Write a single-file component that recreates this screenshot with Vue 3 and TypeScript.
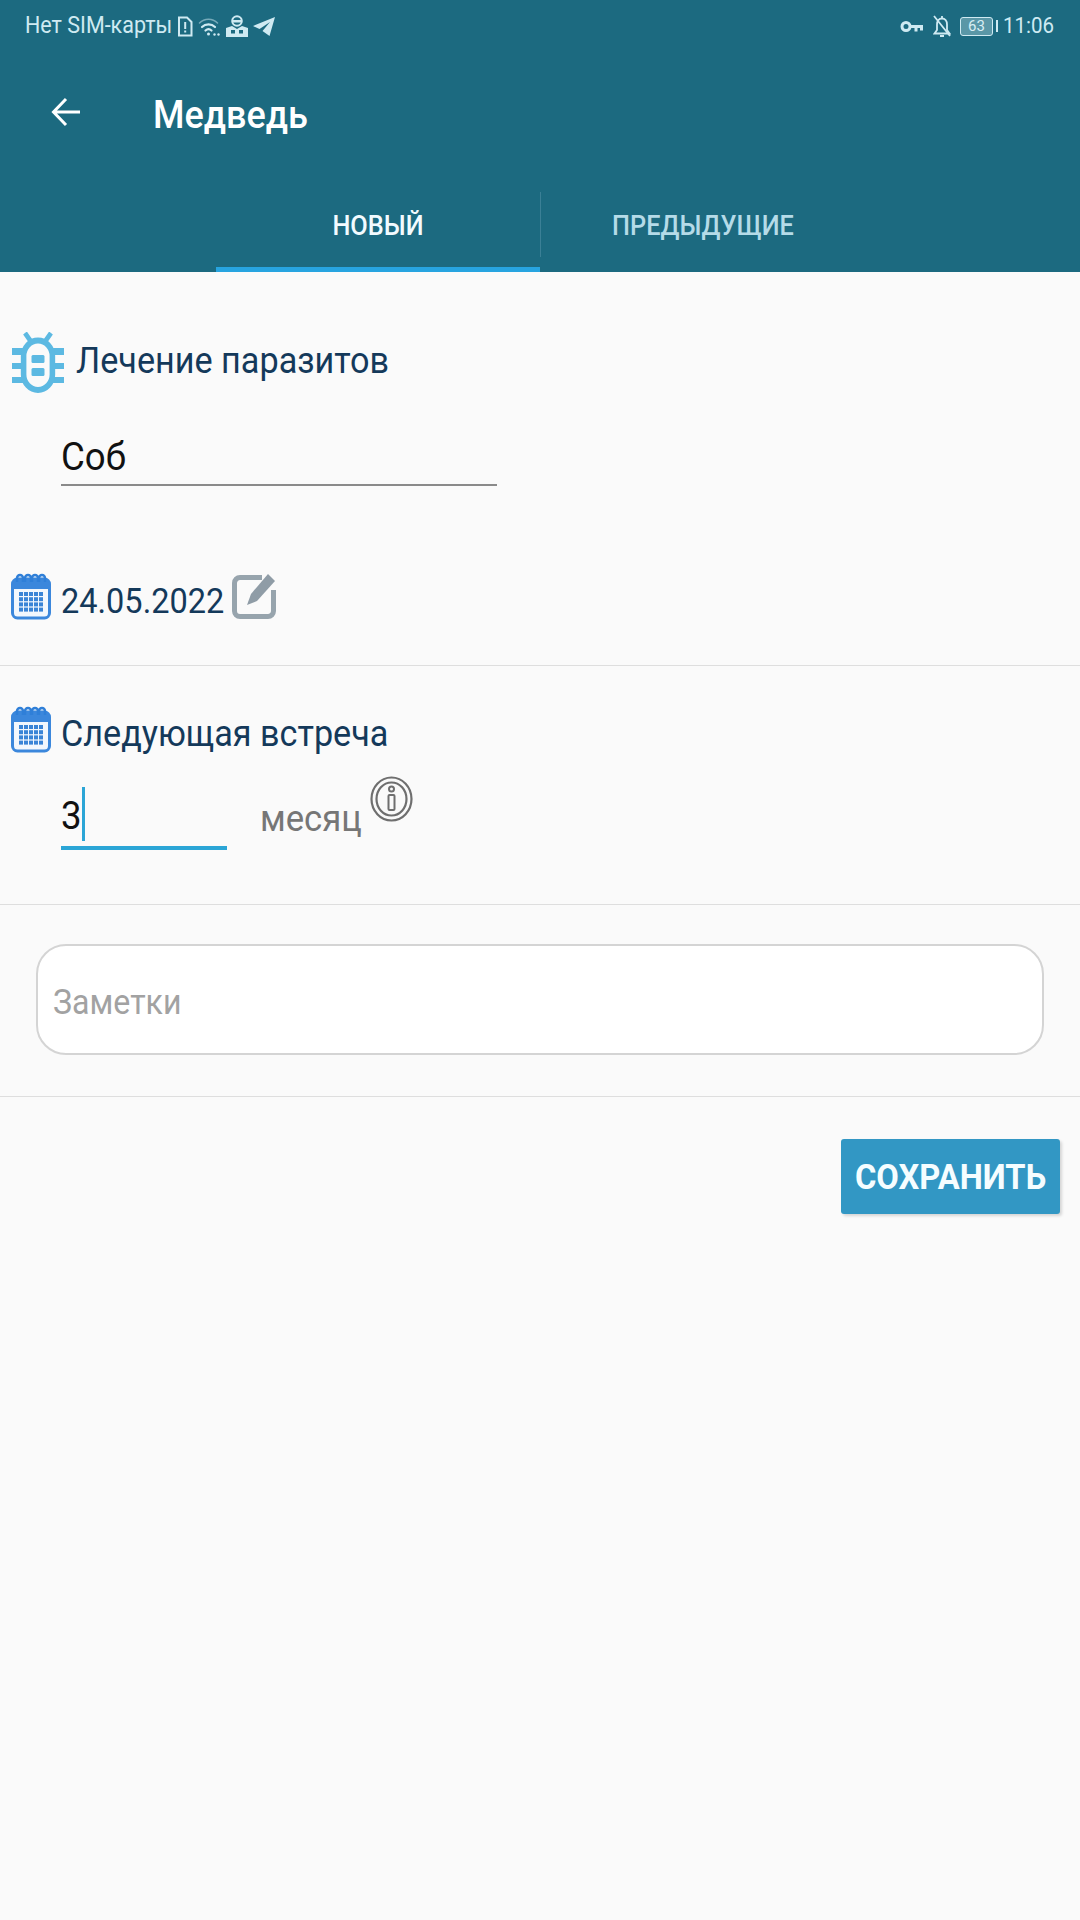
<template>
  <div class="screen">
    <header class="app-header">
      <div class="status-bar">
        <div class="status-side">
          <span class="status-text tall">Нет SIM-карты</span>
          <svg class="ic-sim" viewBox="0 0 16 21" fill="none" stroke="currentColor" stroke-width="2">
            <path d="M2 1.500h8l4.500 4.500v13.500H2z" />
            <path d="M8.200 6v7M8.200 14.500v2" />
          </svg>
          <svg class="ic-wifi" viewBox="0 0 23 21" fill="none" stroke="currentColor" stroke-linecap="round">
            <path d="M1.500 7c5-5 13-5 18 0" stroke-width="1.600" opacity=".5" />
            <path d="M4 11c3.500-3.500 9.500-3.500 13 0" stroke-width="2.200" />
            <path d="M7.500 14.500c2-1.800 4-1.800 6 0" stroke-width="2.200" />
            <circle cx="10.500" cy="18" r="1.500" fill="currentColor" stroke="none" />
            <circle cx="16.500" cy="18.500" r="1.200" fill="currentColor" stroke="none" />
            <circle cx="20.500" cy="18.500" r="1.200" fill="currentColor" stroke="none" />
          </svg>
          <svg class="ic-spy" viewBox="0 0 22 22" fill="currentColor">
            <circle cx="11" cy="6" r="4.800" fill="none" stroke="currentColor" stroke-width="2" />
            <path d="M7 5h8v2.500H7z" />
            <path d="M0 22v-9l6-2 5 3 5-3 6 2v9z" />
            <path d="M5 15h4v3.500H5zM13 15h4v3.500h-4z" fill="#1c6a80" />
          </svg>
          <svg class="ic-send" viewBox="0 0 22 20" fill="currentColor">
            <path d="M22 1 0 10l6.500 3L17 6l-7.500 9 7 5z" />
          </svg>
        </div>
        <div class="status-side status-right">
          <svg class="ic-key" viewBox="0 0 23 13" fill="none" stroke="currentColor" stroke-width="3">
            <circle cx="6" cy="6.500" r="4" />
            <path d="M10 6.500h13M16 6.500v5M21.500 6.500v4" />
          </svg>
          <svg class="ic-bell" viewBox="0 0 18 23" fill="none" stroke="currentColor" stroke-width="1.800">
            <path d="M4 9.500C4 6 6 3.500 9 3.500s5 2.500 5 6V15l2.500 3.500h-15L4 15z" />
            <path d="M7 21h4M9 1v2.500M1 1l16 20" />
          </svg>
          <div class="battery">
            <span class="battery-level">63</span>
          </div>
          <span class="battery-tip"></span>
          <span class="status-text clock tall">11:06</span>
        </div>
      </div>

      <div class="toolbar">
        <svg class="ic-back" viewBox="0 0 29 30" fill="none" stroke="currentColor" stroke-width="3">
          <path d="M29 15H3M15 2 2.500 15 15 28" />
        </svg>
        <h1 class="title tall">{{ petName }}</h1>
      </div>

      <nav class="tabs">
        <div class="tab tab-active"><span class="tall">НОВЫЙ</span></div>
        <div class="tab tab-second"><span class="tall">ПРЕДЫДУЩИЕ</span></div>
      </nav>
    </header>

    <main class="content">
      <section class="section section-treatment">
        <div class="label-row">
          <svg class="ic-bug" viewBox="0 0 56 62" preserveAspectRatio="none" fill="#5cb9e2">
            <path d="M20 9 14 1M36 9l6-8" stroke="#5cb9e2" stroke-width="5" />
            <rect x="0" y="16" width="14" height="7" />
            <rect x="0" y="31" width="14" height="6" />
            <rect x="0" y="45" width="14" height="6" />
            <rect x="42" y="16" width="14" height="7" />
            <rect x="42" y="31" width="14" height="6" />
            <rect x="42" y="45" width="14" height="6" />
            <rect x="12.500" y="8.500" width="31" height="49.500" rx="15.500" fill="#fafafa" stroke="#5cb9e2" stroke-width="6" />
            <rect x="21" y="23" width="14" height="8" rx="1.500" />
            <rect x="21" y="36" width="14" height="8" rx="1.500" />
          </svg>
          <span class="label label-treatment tall">Лечение паразитов</span>
        </div>
        <div class="text-field"><span class="tall">Соб</span></div>
      </section>

      <section class="section section-date">
        <div class="date-row">
          <svg class="ic-calendar" viewBox="0 0 40 48" v-html="calendarMarkup"></svg>
          <span class="label date-value tall">24.05.2022</span>
          <svg class="ic-edit" viewBox="0 0 44 48" fill="none">
            <path d="M30 5.500H8a5.500 5.500 0 0 0-5.500 5.500v28A5.500 5.500 0 0 0 8 44.500h28a5.500 5.500 0 0 0 5.500-5.500V18" stroke="#97a4ad" stroke-width="5" />
            <path d="M15 33l4-11L36 2l7 7-18 20z" fill="#8f9ca6" />
          </svg>
        </div>
      </section>

      <section class="section section-next">
        <div class="label-row next-label">
          <svg class="ic-calendar" viewBox="0 0 40 48" v-html="calendarMarkup"></svg>
          <span class="label next-title tall">Следующая встреча</span>
        </div>
        <div class="period-row">
          <div class="period-input">
            <span class="tall">3</span><span class="caret"></span>
          </div>
          <span class="period-unit tall">месяц</span>
          <svg class="ic-info" viewBox="0 0 43 46" fill="none" stroke="#6f6f6f">
            <ellipse cx="21.500" cy="23" rx="20" ry="21.500" stroke-width="2.200" />
            <ellipse cx="21.500" cy="23" rx="15" ry="16.500" stroke-width="2.200" />
            <rect x="18.500" y="19" width="6" height="15" rx="1" stroke-width="2" />
            <circle cx="21.500" cy="13" r="2.500" stroke-width="2" />
          </svg>
        </div>
      </section>

      <section class="section section-notes">
        <div class="notes-box"><span class="tall">Заметки</span></div>
      </section>

      <div class="actions">
        <button class="save-btn" type="button"><span class="tall">СОХРАНИТЬ</span></button>
      </div>
    </main>
  </div>
</template>

<script setup lang="ts">
const petName = 'Медведь'

const dots = [0, 1, 2, 3, 4]
  .flatMap((col) =>
    [0, 1, 2, 3].map(
      (row) => `<rect x="${8 + col * 5}" y="${20 + row * 5.2}" width="4" height="4" fill="#3a84d6"/>`
    )
  )
  .join('')

const calendarMarkup =
  '<rect x="1.500" y="7" width="37" height="39" rx="5" fill="#f2f7fd" stroke="#3b87dc" stroke-width="3"/>' +
  '<path d="M2 17V11a4 4 0 0 1 4-4h28a4 4 0 0 1 4 4v6z" fill="#3b87dc"/>' +
  '<path d="M6 10V6a3 3 0 0 1 6 0v4M14 10V6a3 3 0 0 1 6 0v4M21 10V6a3 3 0 0 1 6 0v4M28 10V6a3 3 0 0 1 6 0v4" fill="none" stroke="#2f7fd8" stroke-width="2.500"/>' +
  dots
</script>

<style>
html,
body {
  margin: 0;
  background: #fafafa;
}
</style>

<style scoped>
.screen {
  width: 1080px;
  height: 1920px;
  overflow: hidden;
  background: #fafafa;
  font-family: Roboto, "Noto Sans", sans-serif;
}

/* the reference is slightly stretched vertically */
.tall {
  display: inline-block;
  transform: scaleY(1.07);
}

.app-header {
  height: 272px;
  background: #1c6a80;
  display: flex;
  flex-direction: column;
}

.status-bar {
  height: 52px;
  padding: 0 26px 0 25px;
  display: flex;
  align-items: center;
  justify-content: space-between;
  color: #cfeaf2;
}

.status-side {
  display: flex;
  align-items: center;
  gap: 5px;
}

.status-right {
  gap: 0;
}

.status-text {
  font-size: 21.500px;
  line-height: 26px;
}

.clock {
  margin-left: 5px;
  font-size: 20.500px;
}

.ic-sim { width: 16px; height: 21px; }
.ic-wifi { width: 23px; height: 21px; }
.ic-spy { width: 22px; height: 22px; }
.ic-send { width: 22px; height: 20px; }
.ic-key { width: 23px; height: 13px; margin-right: 10px; }
.ic-bell { width: 18px; height: 23px; margin-right: 9px; }

.battery {
  width: 33px;
  height: 19px;
  box-sizing: border-box;
  border: 1px solid #cfeaf2;
  border-radius: 3px;
  background: rgba(207, 234, 242, 0.35);
  display: flex;
  align-items: center;
  justify-content: center;
}

.battery-level {
  font-size: 15px;
  color: #d8eef4;
}

.battery-tip {
  width: 2px;
  height: 12px;
  margin-left: 3px;
  background: #cfeaf2;
}

.toolbar {
  height: 126px;
  padding-left: 51px;
  display: flex;
  align-items: center;
  color: #fff;
}

.ic-back {
  width: 29px;
  height: 30px;
  margin-top: -6px;
}

.title {
  margin: 0 0 0 73px;
  font-size: 36px;
  font-weight: 500;
}

.tabs {
  flex: 1;
  padding-left: 216px;
  display: flex;
  align-items: stretch;
}

.tab {
  width: 324px;
  display: flex;
  align-items: center;
  justify-content: center;
  font-size: 25.300px;
  font-weight: 500;
  color: #b5dbe8;
}

.tab-active {
  color: #f2fbff;
  padding-top: 6px;
  border-bottom: 5px solid #27a4e0;
}

.tab-second {
  margin: 14px 0 15px;
  padding-top: 2px;
  border-left: 1px solid #3b8096;
}

.content {
  display: flex;
  flex-direction: column;
}

.section {
  box-sizing: border-box;
  border-bottom: 1px solid #dedede;
}

.section-treatment {
  height: 200px;
  border-bottom: 0;
  padding: 60px 0 0 11px;
}

.label-row {
  display: flex;
  align-items: center;
  gap: 11px;
}

.label {
  font-size: 34.200px;
  line-height: 44px;
  color: #14395a;
}

.label-treatment {
  margin-bottom: 6px;
}

.ic-bug {
  width: 52px;
  height: 62px;
  margin: 0 1px;
}

.text-field {
  width: 436px;
  height: 55px;
  margin: 35px 0 0 50px;
  border-bottom: 2px solid #8a8a8a;
  font-size: 36.600px;
  line-height: 56px;
  color: #111;
}

.section-date {
  height: 194px;
  padding: 0 0 45px 11px;
  display: flex;
  align-items: flex-end;
}

.date-row {
  display: flex;
  align-items: flex-end;
  gap: 10px;
}

.date-value {
  font-size: 32.500px;
  margin-bottom: -3px;
}

.ic-calendar {
  width: 40px;
  height: 48px;
  flex: none;
}

.ic-edit {
  width: 44px;
  height: 48px;
  margin-left: -2px;
}

.section-next {
  height: 239px;
  padding: 39px 0 0 11px;
}

.next-label {
  align-items: flex-end;
  gap: 10px;
}

.next-title {
  margin-bottom: -2px;
}

.period-row {
  display: flex;
  align-items: flex-start;
  margin: 22px 0 0 50px;
}

.period-input {
  width: 166px;
  height: 75px;
  border-bottom: 4px solid #2ba5d6;
  display: flex;
  align-items: flex-end;
  font-size: 36.600px;
  line-height: 50px;
  color: #111;
  padding-bottom: 5px;
  box-sizing: border-box;
}

.caret {
  width: 3px;
  height: 54px;
  background: #2ba5d6;
}

.period-unit {
  margin: 21px 0 0 33px;
  font-size: 34.700px;
  line-height: 44px;
  color: #767676;
}

.ic-info {
  width: 43px;
  height: 46px;
  margin: 1px 0 0 8px;
}

.section-notes {
  height: 192px;
  padding: 39px 36px 0;
}

.notes-box {
  height: 111px;
  box-sizing: border-box;
  border: 2px solid #d4d4d4;
  border-radius: 30px;
  background: #fff;
  padding: 4px 0 0 15px;
  display: flex;
  align-items: center;
  font-size: 32.100px;
  color: #a2a2a2;
}

.actions {
  display: flex;
  justify-content: flex-end;
  padding: 42px 20px 0 0;
}

.save-btn {
  width: 219px;
  height: 75px;
  padding: 0;
  border: 0;
  border-radius: 3px;
  background: #3297c4;
  box-shadow: 2px 2px 3px rgba(0, 0, 0, 0.15);
  color: #f5fdff;
  font-family: inherit;
  font-size: 32.700px;
  font-weight: 700;
}
</style>
